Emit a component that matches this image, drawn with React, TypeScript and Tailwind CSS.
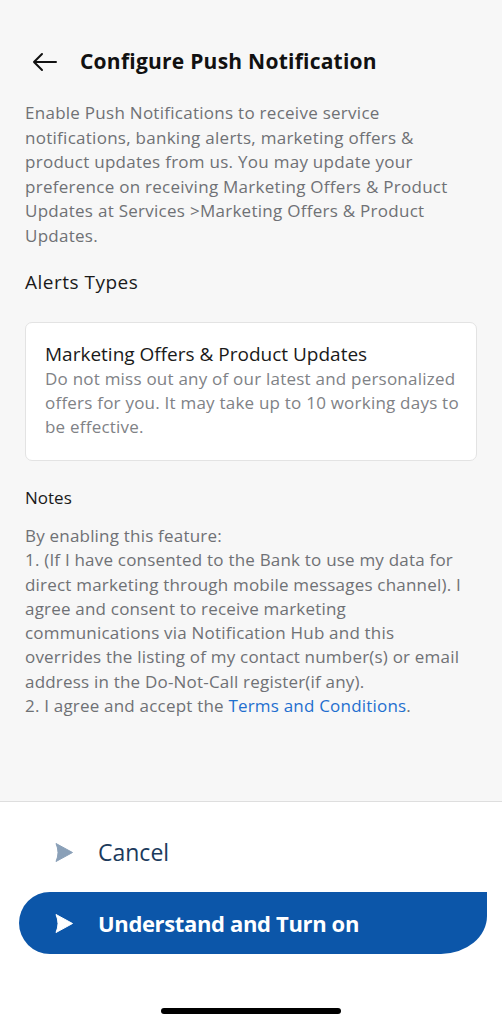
import React from "react";

function Tri({ color }: { color: string }) {
  return (
    <svg width="18" height="19" viewBox="0 0 18 19" className="shrink-0">
      <path d="M1 0.5 L17.5 9.5 L1 18.5 Q5 9.5 1 0.5 Z" fill={color} stroke={color} strokeWidth="1" strokeLinejoin="round" />
    </svg>
  );
}

export default function App() {
  const desc = [
    "Enable Push Notifications to receive service",
    "notifications, banking alerts, marketing offers &",
    "product updates from us. You may update your",
    "preference on receiving Marketing Offers & Product",
    "Updates at Services >Marketing Offers & Product",
    "Updates.",
  ];
  const card = [
    "Do not miss out any of our latest and personalized",
    "offers for you. It may take up to 10 working days to",
    "be effective.",
  ];
  const notes = [
    "By enabling this feature:",
    "1. (If I have consented to the Bank to use my data for",
    "direct marketing through mobile messages channel). I",
    "agree and consent to receive marketing",
    "communications via Notification Hub and this",
    "overrides the listing of my contact number(s) or email",
    "address in the Do-Not-Call register(if any).",
  ];
  return (
    <div
      className="w-[502px] h-[1024px] flex flex-col bg-white overflow-hidden"
      style={{ fontFamily: "'Open Sans', Lato, sans-serif" }}
    >
      <div className="h-[801px] bg-[#f7f7f7] flex flex-col px-[25px]">
        <div className="mt-[44px] h-[36px] flex items-center">
          <svg width="26" height="20" viewBox="0 0 26 20" className="ml-[7px]">
            <path d="M24 10 H2 M10 2 L2 10 L10 18" fill="none" stroke="#111" strokeWidth="2" strokeLinecap="round" strokeLinejoin="round" />
          </svg>
          <div className="ml-[22px] text-[21px] font-bold text-[#111] tracking-[0.24px]">Configure Push Notification</div>
        </div>
        <div className="mt-[21px] text-[17px] leading-[24.5px] tracking-[0.27px] text-[#6f7175]">
          {desc.map((l, i) => (
            <div key={i} className="whitespace-nowrap">{l}</div>
          ))}
        </div>
        <div className="mt-[22px] text-[19px] leading-[24px] tracking-[0.5px] text-[#1a1a1a]">Alerts Types</div>
        <div className="mt-[28px] bg-white border border-[#e3e3e3] rounded-[7px] pt-[18px] pb-[21px] px-[19px]">
          <div className="text-[19px] leading-[26px] text-[#1a1a1a] whitespace-nowrap">Marketing Offers &amp; Product Updates</div>
          <div className="text-[17px] leading-[24px] tracking-[0.22px] text-[#808286]">
            {card.map((l, i) => (
              <div key={i} className="whitespace-nowrap">{l}</div>
            ))}
          </div>
        </div>
        <div className="mt-[26px] text-[17px] leading-[22px] text-[#1a1a1a]">Notes</div>
        <div className="mt-[15px] text-[17px] leading-[24.3px] tracking-[0.2px] text-[#6f7175]">
          {notes.map((l, i) => (
            <div key={i} className="whitespace-nowrap">{l}</div>
          ))}
          <div className="whitespace-nowrap">
            2. I agree and accept the <span className="text-[#1f6fcf]">Terms and Conditions</span>.
          </div>
        </div>
      </div>
      <div className="border-t border-[#dedede] flex-1 bg-white flex flex-col">
        <div className="mt-[25px] h-[50px] flex items-center pl-[55px]">
          <Tri color="#8aa0b8" />
          <span className="ml-[25px] text-[23px] font-medium text-[#1b3a5c]">Cancel</span>
        </div>
        <div className="mt-[15px] ml-[19px] w-[468px] h-[62px] bg-[#0c56a9] rounded-tl-[31px] rounded-bl-[31px] rounded-br-[46px_38px] flex items-center pl-[36px]">
          <Tri color="#ffffff" />
          <span className="ml-[25px] text-[22px] font-bold tracking-[-0.35px] text-white">Understand and Turn on</span>
        </div>
        <div className="mt-[54px] mx-auto w-[180px] h-[6px] rounded-full bg-black" />
      </div>
    </div>
  );
}
